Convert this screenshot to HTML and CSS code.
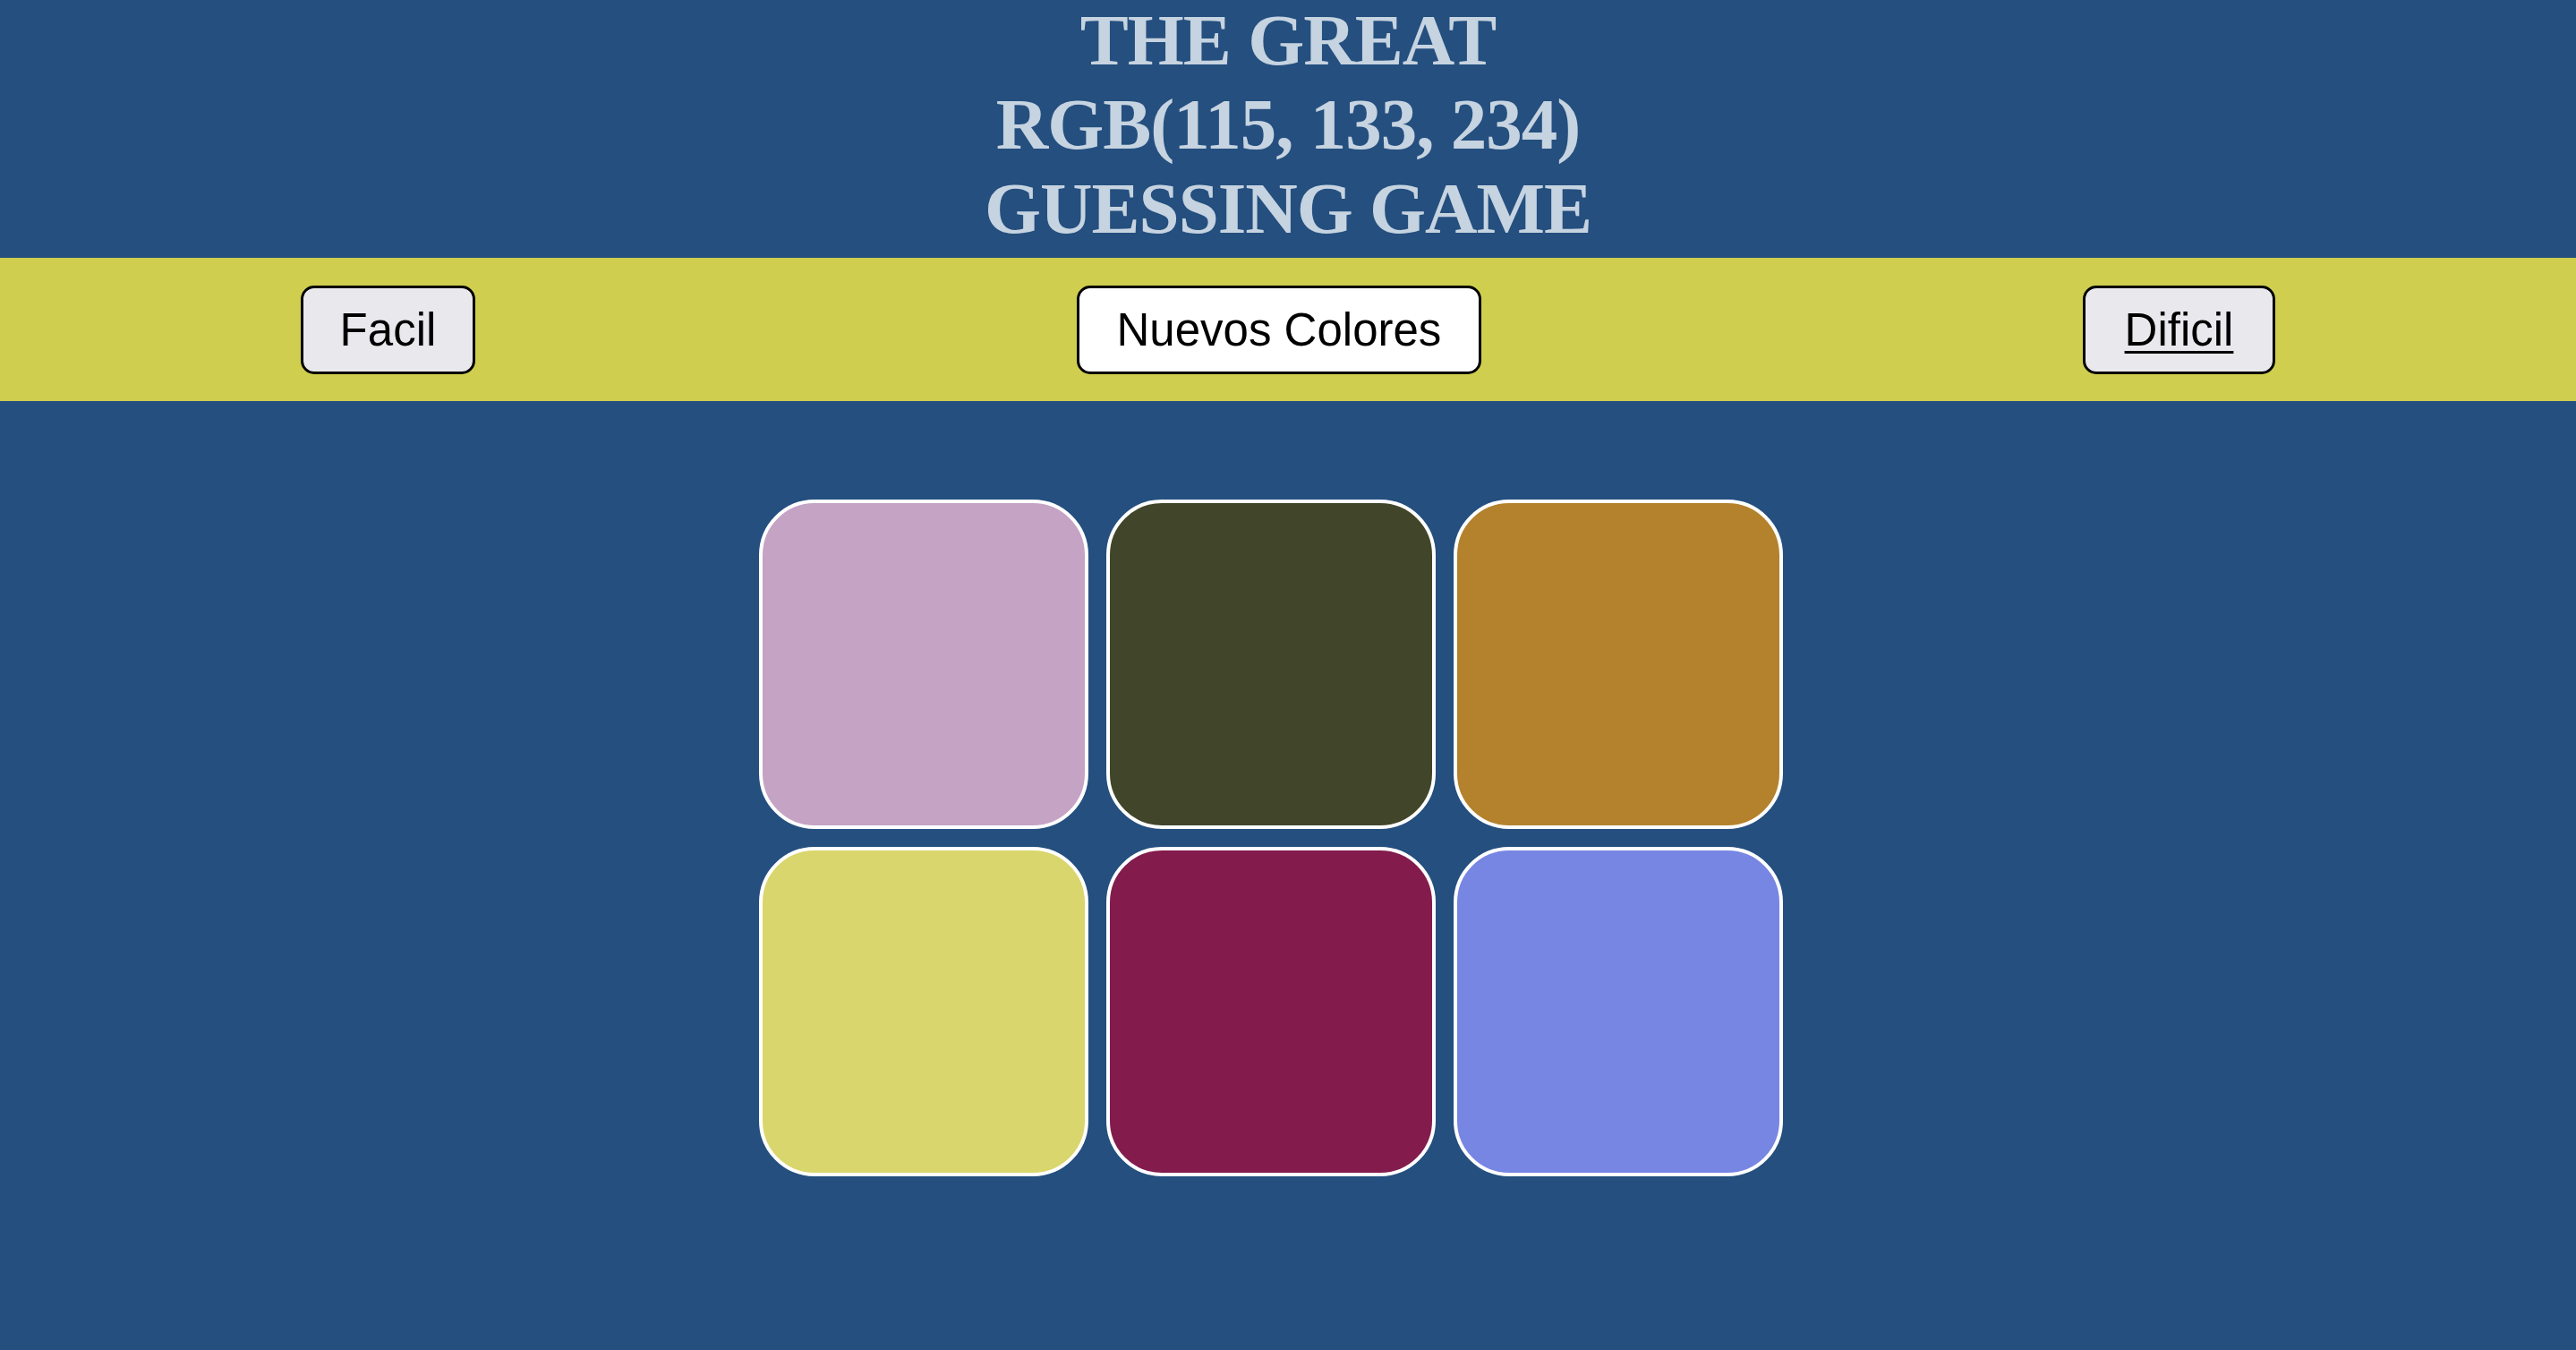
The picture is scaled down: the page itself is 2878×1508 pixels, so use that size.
FILE: index.html
```html
<!DOCTYPE html>
<html lang="es">
<head>
<meta charset="utf-8">
<title>The Great RGB Guessing Game</title>
<link rel="stylesheet" href="styles.css">
</head>
<body>
  <h1 class="title">
    <span class="title-line">THE GREAT</span>
    <span class="title-line target">RGB(115, 133, 234)</span>
    <span class="title-line">GUESSING GAME</span>
  </h1>
  <div class="bar">
    <button class="btn btn-mode">Facil</button>
    <button class="btn btn-reset">Nuevos Colores</button>
    <button class="btn btn-mode btn-selected">Dificil</button>
  </div>
  <div class="grid">
    <div class="square sq-pink"></div>
    <div class="square sq-olive"></div>
    <div class="square sq-gold"></div>
    <div class="square sq-yellow"></div>
    <div class="square sq-maroon"></div>
    <div class="square sq-blue"></div>
  </div>
</body>
</html>
```
FILE: styles.css
```css
html, body {
  margin: 0;
  padding: 0;
}
body {
  background: #244f7f;
  min-height: 100vh;
}
.title {
  margin: 0;
  padding: 0 0 10px 0;
  display: flex;
  flex-direction: column;
  align-items: center;
  gap: 4px;
  text-align: center;
  font-family: "Liberation Serif", "Times New Roman", serif;
  font-weight: bold;
  font-size: 81px;
  letter-spacing: -1px;
  color: #c6d3e0;
}
.title-line {
  display: block;
  line-height: 90px;
}
.bar {
  height: 160px;
  background: #cfce4e;
  display: flex;
  justify-content: space-around;
  align-items: center;
}
.btn {
  box-sizing: border-box;
  height: 99px;
  padding: 0 41px;
  border: 3px solid #000;
  border-radius: 15px;
  background: #e9e9ed;
  color: #000;
  font-family: "Liberation Sans", Arial, sans-serif;
  font-size: 51px;
  line-height: 1;
}
.btn-reset {
  background: #ffffff;
  padding: 0 42px;
}
.btn-selected {
  text-decoration: underline;
  text-underline-offset: 6px;
  text-decoration-thickness: 3px;
  padding: 0 44px;
}
.grid {
  width: 1202px;
  margin: 100px auto 0 auto;
  display: flex;
  flex-wrap: wrap;
}
.square {
  width: 360px;
  height: 360px;
  margin: 10px;
  border: 4px solid #ffffff;
  border-radius: 62px;
}
.sq-pink { background: #c4a3c4; }
.sq-olive { background: #41452a; }
.sq-gold { background: #b4822c; }
.sq-yellow { background: #d9d66d; }
.sq-maroon { background: #831b4d; }
.sq-blue { background: #7786e3; }
```
